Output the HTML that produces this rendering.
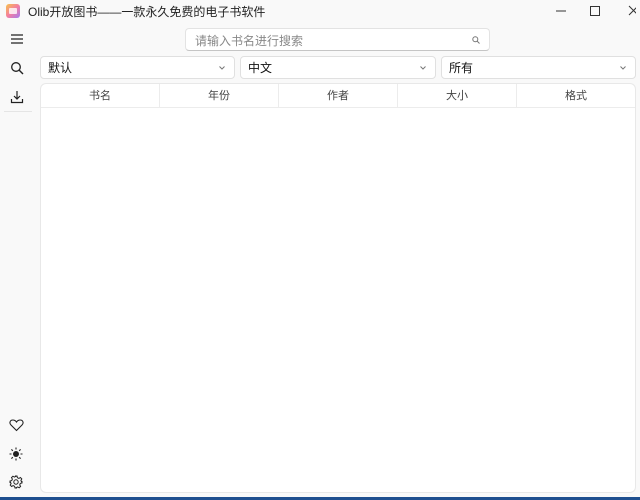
<!DOCTYPE html>
<html><head><meta charset="utf-8"><style>
*{box-sizing:border-box;margin:0;padding:0}
body{width:640px;height:500px;background:#f9f9f9;font-family:"Liberation Sans","Noto Sans CJK SC",sans-serif;position:relative;overflow:hidden;color:#1a1a1a}
.abs{position:absolute}
.title{left:28px;top:3px;font-size:12px;color:#222}
.logo{left:6px;top:4px;width:14px;height:14px;border-radius:3px;background:linear-gradient(135deg,#f7c44a,#f47ea0,#a57bf0)}
.logo:after{content:"";position:absolute;left:3px;top:4px;width:8px;height:6px;background:#fff;opacity:.8;border-radius:1px}
.search{left:185px;top:28px;width:305px;height:23px;background:#fff;border:1px solid #e3e3e3;border-bottom:1px solid #c5c5c5;border-radius:4px;font-size:12px;color:#888;padding:3px 9px}
.sel{top:56px;height:23px;background:#fff;border:1px solid #e0e0e0;border-radius:4px;font-size:12px;padding:2px 7px;color:#111}
.sel svg{position:absolute;right:9px;top:9px}
.table{left:40px;top:83px;width:596px;height:410px;background:#fff;border:1px solid #e8e8e8;border-radius:6px}
.hdr{display:flex;height:24px;border-bottom:1px solid #ececec}
.hdr div{flex:1;text-align:center;font-size:11px;color:#444;line-height:24px;border-right:1px solid #ececec}
.hdr div:last-child{border-right:0}
svg{display:block}
</style></head><body>
<div class="abs logo"></div>
<div class="abs title">Olib开放图书——一款永久免费的电子书软件</div>
<svg class="abs" style="left:556px;top:4px" width="80" height="14"><line x1="0" y1="7" x2="10" y2="7" stroke="#333"/><rect x="34.5" y="2.5" width="9" height="9" fill="none" stroke="#333"/><path d="M73 2l9 9M82 2l-9 9" stroke="#333"/></svg>
<svg class="abs" style="left:10px;top:32px" width="14" height="14"><path d="M1 3h12M1 7h12M1 11h12" stroke="#222" stroke-width="1.2"/></svg>
<svg class="abs" style="left:10px;top:61px" width="14" height="14"><circle cx="6" cy="6" r="4.3" fill="none" stroke="#222" stroke-width="1.3"/><path d="M9 9l4 4" stroke="#222" stroke-width="1.4"/></svg>
<svg class="abs" style="left:10px;top:90px" width="14" height="14"><path d="M7 1v8M4 6l3 3 3-3M1.5 9v3.5h11V9" fill="none" stroke="#222" stroke-width="1.2"/></svg>
<div class="abs" style="left:4px;top:111px;width:28px;height:1px;background:#e5e5e5"></div>
<svg class="abs" style="left:9px;top:418px" width="15" height="14"><path d="M7.5 12.5L2 7C0 5 1 2 3.8 2 5.5 2 6.8 3 7.5 4 8.2 3 9.5 2 11.2 2 14 2 15 5 13 7z" fill="none" stroke="#222" stroke-width="1.1"/></svg>
<svg class="abs" style="left:9px;top:447px" width="14" height="14"><circle cx="7" cy="7" r="3" fill="#222"/><path d="M7 0.5v2M7 11.5v2M0.5 7h2M11.5 7h2M2.4 2.4l1.4 1.4M10.2 10.2l1.4 1.4M2.4 11.6l1.4-1.4M10.2 3.8l1.4-1.4" stroke="#222" stroke-width="1.1"/></svg>
<svg class="abs" style="left:9px;top:475px" width="14" height="14"><circle cx="7" cy="7" r="2.2" fill="none" stroke="#222"/><path d="M6 1h2l.4 1.7 1.5.7 1.5-.9 1.4 1.4-.9 1.5.7 1.5L13 6v2l-1.7.4-.6 1.5.9 1.5-1.4 1.4-1.5-.9-1.5.7L8 13H6l-.4-1.7-1.5-.7-1.5.9-1.4-1.4.9-1.5-.7-1.5L1 8V6l1.7-.4.7-1.5-.9-1.5 1.4-1.4 1.5.9 1.5-.7z" fill="none" stroke="#222"/></svg>
<div class="abs search">请输入书名进行搜索<svg style="position:absolute;right:9px;top:7px" width="8" height="8"><circle cx="3.3" cy="3.3" r="2.5" fill="none" stroke="#777"/><path d="M5 5l2.5 2.5" stroke="#777"/></svg></div>
<div class="abs sel" style="left:40px;width:195px">默认<svg width="6" height="4"><path d="M0.5 0.5l2.5 2.5 2.5-2.5" fill="none" stroke="#777"/></svg></div>
<div class="abs sel" style="left:240px;width:196px">中文<svg width="6" height="4"><path d="M0.5 0.5l2.5 2.5 2.5-2.5" fill="none" stroke="#777"/></svg></div>
<div class="abs sel" style="left:441px;width:195px">所有<svg width="6" height="4"><path d="M0.5 0.5l2.5 2.5 2.5-2.5" fill="none" stroke="#777"/></svg></div>
<div class="abs table"><div class="hdr"><div>书名</div><div>年份</div><div>作者</div><div>大小</div><div>格式</div></div></div>
<div class="abs" style="left:0;top:497px;width:640px;height:3px;background:#1e4f8f"></div>
</body></html>
